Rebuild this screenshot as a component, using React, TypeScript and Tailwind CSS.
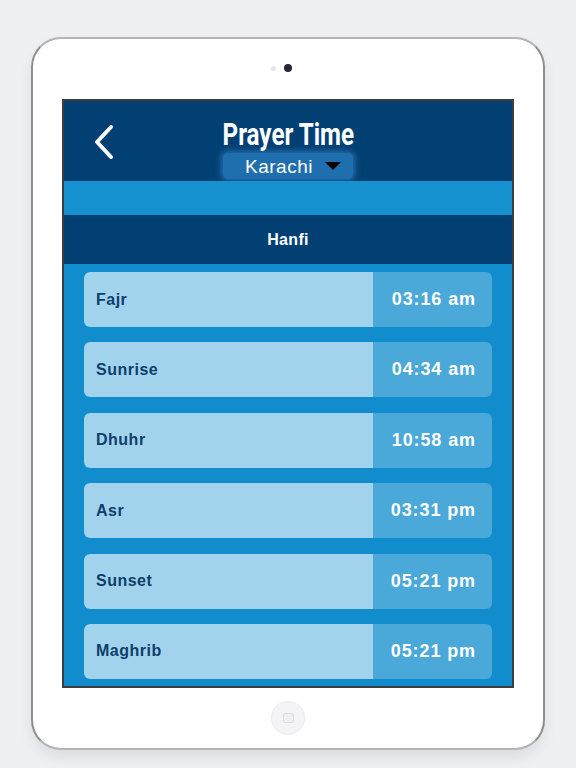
import React from "react";

const rows: [string, string][] = [
  ["Fajr", "03:16 am"],
  ["Sunrise", "04:34 am"],
  ["Dhuhr", "10:58 am"],
  ["Asr", "03:31 pm"],
  ["Sunset", "05:21 pm"],
  ["Maghrib", "05:21 pm"],
];

export default function App() {
  return (
    <div className="min-h-screen w-full bg-[#eef0f3] flex justify-center pt-[37px]" style={{ fontFamily: '"Liberation Sans", Arial, sans-serif' }}>
      <div className="w-[514px] h-[713px] rounded-[30px] border-2 border-x-[#8e8e90] border-y-[#b4b4b6] bg-white shadow-[0_8px_14px_rgba(0,0,0,0.08)] flex flex-col items-center">
        <div className="h-[60px] w-full flex items-center justify-center gap-[8px] pb-[2px]">
          <div className="w-[5px] h-[5px] rounded-full bg-[#e6e6ea]" />
          <div className="w-[8px] h-[8px] rounded-full bg-[#262739]" />
          <div className="w-[5px] h-[5px]" />
        </div>
        <div className="w-[452px] h-[589px] border-2 border-[#3d3d40] flex flex-col overflow-hidden">
          <div className="h-[80px] bg-[#023f73] grid grid-cols-[1fr_auto_1fr] shrink-0">
            <div className="flex items-start pl-[29px] pt-[23px]">
              <svg width="22" height="36" viewBox="0 0 22 36" fill="none">
                <polyline points="18,3 4,18 18,33" stroke="white" strokeWidth="4" strokeLinecap="round" strokeLinejoin="round" />
              </svg>
            </div>
            <div className="flex flex-col items-center pt-[19px]">
              <div className="text-white font-bold text-[31px] leading-[30px] scale-x-[0.78] whitespace-nowrap" style={{ fontFamily: 'Roboto, "Liberation Sans", sans-serif' }}>
                Prayer Time
              </div>
              <div className="mt-[3px] w-[130px] h-[26px] rounded-[5px] bg-[#1f6fae] shadow-[0_0_6px_2px_rgba(70,150,220,0.55)] flex items-center justify-center gap-[12px] pl-[10px]">
                <span className="text-white text-[19px] tracking-[0.5px] leading-none">Karachi</span>
                <svg width="16" height="9" viewBox="0 0 16 9">
                  <polygon points="0,0 16,0 8,8" fill="#000" />
                </svg>
              </div>
            </div>
            <div />
          </div>
          <div className="h-[34px] bg-[#1591d0] shrink-0" />
          <div className="h-[49px] bg-[#023f73] shrink-0 flex items-center justify-center">
            <span className="text-white font-bold text-[16px] tracking-[0.3px]">Hanfi</span>
          </div>
          <div className="flex-1 bg-[#118dcd] px-[20px] pt-[8px] flex flex-col gap-[15.4px] overflow-hidden">
            {rows.map(([name, time]) => (
              <div key={name} className="h-[55px] shrink-0 rounded-[6px] overflow-hidden flex">
                <div className="w-[289px] bg-[#a2d3ed] flex items-center pl-[12px]">
                  <span className="text-[#0d3e6c] font-bold text-[16px] tracking-[0.5px]">{name}</span>
                </div>
                <div className="flex-1 bg-[#4aa9d9] flex items-center justify-end pr-[16px]">
                  <span className="text-white font-bold text-[18px] tracking-[0.9px]">{time}</span>
                </div>
              </div>
            ))}
          </div>
        </div>
        <div className="mt-[13px] w-[34px] h-[34px] rounded-full bg-[#f4f4f6] border border-[#ececef] flex items-center justify-center">
          <div className="w-[11px] h-[10px] rounded-[2px] border border-[#dcdcdf] bg-[#f0f0f2]" />
        </div>
      </div>
    </div>
  );
}
